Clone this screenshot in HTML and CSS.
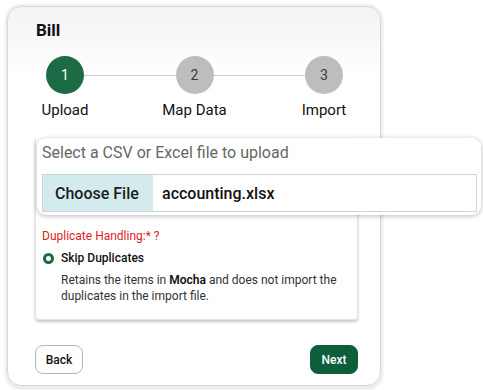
FILE: index.html
```html
<!DOCTYPE html>
<html>
<head>
<meta charset="utf-8">
<link rel="stylesheet" href="styles.css">
</head>
<body>
<div class="card">
  <div class="title">Bill</div>
  <div class="stepper">
    <div class="circle active">1</div>
    <div class="line"></div>
    <div class="circle">2</div>
    <div class="line"></div>
    <div class="circle">3</div>
    <div class="label">Upload</div>
    <div></div>
    <div class="label">Map Data</div>
    <div></div>
    <div class="label">Import</div>
  </div>
  <div class="panel">
    <div class="callout">
      <div class="callout-title">Select a CSV or Excel file to upload</div>
      <div class="file">
        <div class="choose">Choose File</div>
        <div class="fname">accounting.xlsx</div>
      </div>
    </div>
    <div class="dup">Duplicate Handling:* ?</div>
    <div class="option">
      <span class="radio"></span>
      <span class="opt-label">Skip Duplicates</span>
    </div>
    <div class="desc">
      <div class="desc-line"><span>Retains the items in </span><b>Mocha</b><span> and does not import the</span></div>
      <div class="desc-line">duplicates in the import file.</div>
    </div>
  </div>
  <div class="actions">
    <button class="btn back">Back</button>
    <button class="btn next">Next</button>
  </div>
</div>
</body>
</html>
```
FILE: styles.css
```css
* { box-sizing: border-box; }
html, body { margin: 0; padding: 0; background: #fff; }
body {
  font-family: Roboto, "Liberation Sans", Arial, sans-serif;
  color: #222;
  width: 483px;
  height: 390px;
  overflow: hidden;
}
.card {
  margin: 6px 0 0 7px;
  width: 374px;
  height: 380px;
  border: 1px solid #d6d6d6;
  border-radius: 14px;
  box-shadow: 0 0 0 2px #efefef, 0 2px 4px rgba(0,0,0,0.2);
  background: linear-gradient(#f3f3f3 0px, #ffffff 70px);
  padding: 13px 22px 11px 27px;
}
.title {
  font-size: 17px;
  font-weight: 700;
  line-height: 20px;
  padding-left: 1px;
  color: #111;
}
.stepper {
  margin-top: 16px;
  display: grid;
  grid-template-columns: 60px 1fr 60px 1fr 60px;
  padding-right: 4px;
  row-gap: 7px;
}
.circle {
  justify-self: center;
  width: 38px;
  height: 38px;
  border-radius: 50%;
  background: #bdbdbd;
  color: #3a3a3a;
  font-size: 14px;
  display: flex;
  align-items: center;
  justify-content: center;
  position: relative;
  z-index: 1;
}
.circle.active { background: #1b6b44; color: #fff; }
.line {
  align-self: center;
  height: 1px;
  background: #cfcfcf;
  margin: 0 -20px;
}
.label {
  justify-self: center;
  font-size: 15px;
  line-height: 18px;
  color: #111;
  white-space: nowrap;
}
.panel {
  margin-top: 19px;
  border: 1px solid #e3e3e3;
  border-top: none;
  border-radius: 0 0 4px 4px;
  box-shadow: 0 2px 3px rgba(0,0,0,0.22);
  padding: 0 6px 15px 6px;
  height: 182px;
}
.callout {
  position: relative;
  z-index: 2;
  margin-left: -5px;
  width: 444px;
  background: #fff;
  border-radius: 9px;
  box-shadow: 0 1px 5px rgba(0,0,0,0.28);
  padding: 5px 4px 3px 5px;
}
.callout-title {
  font-size: 16px;
  line-height: 20px;
  color: #666;
}
.file {
  margin-top: 11px;
  display: flex;
  height: 38px;
  border: 1px solid #ccd3da;
  font-size: 16px;
  font-weight: 500;
}
.choose {
  width: 110px;
  background: #d3ebed;
  display: flex;
  align-items: center;
  padding-left: 12px;
  color: #1c1c1c;
}
.fname {
  display: flex;
  align-items: center;
  padding-left: 9px;
  color: #111;
  font-weight: 500;
}
.dup {
  margin-top: 13px;
  font-size: 12px;
  line-height: 16px;
  color: #e0201c;
}
.option {
  margin-top: 6px;
  display: flex;
  align-items: center;
  height: 16px;
}
.radio {
  width: 11px;
  height: 11px;
  border-radius: 50%;
  background: #fff;
  border: 3.5px solid #1b6b44;
  margin-left: 1px;
}
.opt-label {
  margin-left: 7px;
  font-size: 12px;
  font-weight: 500;
  color: #111;
}
.desc {
  margin-top: 6px;
  padding-left: 19px;
  font-size: 12px;
  line-height: 16px;
  color: #333;
}
.desc-line { white-space: nowrap; }
.desc b { font-weight: 600; color: #111; }
.actions {
  margin-top: 25px;
  display: flex;
  justify-content: space-between;
}
.btn {
  font-family: Roboto, "Liberation Sans", Arial, sans-serif;
  width: 48px;
  height: 29px;
  border-radius: 8px;
  font-size: 12px;
  font-weight: 500;
  padding: 0;
}
.back { background: #fff; border: 1px solid #aeb8c6; color: #111; }
.next { background: #0e5e3e; border: 1px solid #0e5e3e; color: #fff; }
```
